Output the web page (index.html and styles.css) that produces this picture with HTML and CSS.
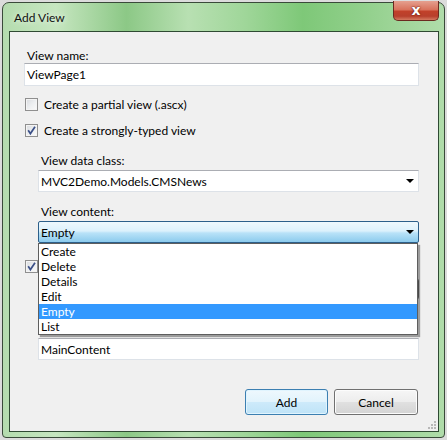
FILE: index.html
```html
<!DOCTYPE html>
<html>
<head>
<meta charset="utf-8">
<link rel="stylesheet" href="styles.css">
</head>
<body>
<div class="window">
  <div class="titlebar">
    <span class="title">Add View</span>
    <div class="close"><span>x</span></div>
  </div>
  <div class="client">
    <div class="label">View name:</div>
    <div class="textbox">ViewPage1</div>

    <div class="check first"><span class="box"></span><span>Create a partial view (.ascx)</span></div>
    <div class="check second"><span class="box checked"><svg viewBox="0 0 13 13" width="13" height="13"><path d="M3.2 6.2 L5.4 9.6 L10 2.8" fill="none" stroke="#3b5088" stroke-width="1.7"/></svg></span><span>Create a strongly-typed view</span></div>

    <div class="group">
      <div class="label ind">View data class:</div>
      <div class="combo"><span>MVC2Demo.Models.CMSNews</span><span class="arrow"></span></div>

      <div class="label ind content-label">View content:</div>
      <div class="dropwrap">
        <div class="combo focused"><span>Empty</span><span class="arrow"></span></div>
        <ul class="list">
          <li>Create</li>
          <li>Delete</li>
          <li>Details</li>
          <li>Edit</li>
          <li class="sel">Empty</li>
          <li>List</li>
        </ul>
      </div>
    </div>

    <div class="check third"><span class="box checked"><svg viewBox="0 0 13 13" width="13" height="13"><path d="M3.2 6.2 L5.4 9.6 L10 2.8" fill="none" stroke="#3b5088" stroke-width="1.7"/></svg></span></div>
    <div class="group">
      <div class="master"><div class="textbox flexgrow"></div><div class="dots"></div></div>
      <div class="label ind cph"></div>
      <div class="textbox">MainContent</div>
    </div>

    <div class="footer">
      <div class="btn default">Add</div>
      <div class="btn">Cancel</div>
    </div>
    <svg class="grip" width="10" height="10" viewBox="0 0 10 10">
      <g fill="#b8b8b8">
        <rect x="7" y="1" width="2" height="2"/>
        <rect x="4" y="4" width="2" height="2"/><rect x="7" y="4" width="2" height="2"/>
        <rect x="1" y="7" width="2" height="2"/><rect x="4" y="7" width="2" height="2"/><rect x="7" y="7" width="2" height="2"/>
      </g>
    </svg>
  </div>
</div>
</body>
</html>
```
FILE: styles.css
```css
* { box-sizing: border-box; }
html, body { margin: 0; padding: 0; }
body {
  width: 447px;
  height: 440px;
  background: #dcdcdc;
  font-family: Lato, "Open Sans", sans-serif;
  font-size: 12px;
  line-height: 15px;
  color: #000;
  overflow: hidden;
}
.window {
  margin: 2px 0 0 2px;
  width: 443px;
  height: 436px;
  border: 1px solid #3a4a3a;
  border-radius: 7px 7px 4px 4px;
  background: linear-gradient(90deg, #b4dcae 0%, #c6e6c0 12%, #8cc886 28%, #b8e0b2 42%, #9fd699 55%, #7ec878 68%, #92d08c 82%, #b0dcaa 100%);
  padding: 0 5px 5px 6px;
  display: flex;
  flex-direction: column;
}
.titlebar {
  height: 28px;
  display: flex;
  justify-content: space-between;
  align-items: flex-start;
  padding-left: 5px;
}
.title {
  margin-top: 7px;
  font-size: 12px;
  color: #111;
  text-shadow: 0 0 6px rgba(255,255,255,0.9);
}
.close {
  margin-top: -2px;
  width: 46px;
  height: 20px;
  border: 1px solid #6b2a20;
  border-top: none;
  border-radius: 0 0 5px 5px;
  background: linear-gradient(180deg, #e5a08f 0%, #d9735d 45%, #c1412a 55%, #b8402c 80%, #d47a60 100%);
  display: flex;
  justify-content: center;
  align-items: center;
}
.close span {
  color: #fff;
  font-family: "DejaVu Sans", sans-serif;
  font-weight: bold;
  font-size: 14px;
  line-height: 14px;
  margin-top: -2px;
  text-shadow: 0 0 2px #6a1a10, 0 0 1px #6a1a10;
}
.client {
  position: relative;
  flex: 1;
  border: 1px solid #2f4a33;
  background: #f0f0f0;
  padding: 16px 19px 16px 14px;
  display: flex;
  flex-direction: column;
}
.label { height: 15px; padding-left: 3px; }
.textbox {
  height: 23px;
  background: #fff;
  border: 1px solid #dde2e8;
  border-top-color: #abadb3;
  padding: 3px 0 0 2px;
}
.check {
  display: flex;
  align-items: center;
  height: 15px;
  padding-left: 1px;
  gap: 6px;
}
.check.first { margin-top: 11px; }
.check.second { margin-top: 11px; }
.check.third { margin-top: 16px; }
.box {
  width: 13px;
  height: 13px;
  border: 1px solid #8f8f8f;
  background: linear-gradient(135deg, #d8dade 0%, #eceef0 50%, #fafafa 100%);
  box-shadow: inset 0 0 0 1px #f4f4f4;
  position: relative;
  flex: none;
}
.box svg { position: absolute; left: -1px; top: -1px; }
.group {
  margin-left: 14px;
  display: flex;
  flex-direction: column;
}
.group > .label:first-child { margin-top: 15px; }
.label.ind { margin-bottom: 2px; }
.content-label { margin-top: 12px; }
.combo {
  height: 22px;
  background: #fff;
  border: 1px solid #dde2e8;
  border-top-color: #abadb3;
  display: flex;
  justify-content: space-between;
  align-items: center;
  padding: 0 4px 0 2px;
}
.combo.focused {
  border: 1px solid #2c5f8a;
  border-radius: 2px;
  background: linear-gradient(180deg, #eef8fd 0%, #dcf1fc 45%, #b9e2f8 55%, #8ccbed 100%);
}
.arrow {
  width: 0;
  height: 0;
  border-left: 4px solid transparent;
  border-right: 4px solid transparent;
  border-top: 4px solid #000;
}
.dropwrap { position: relative; }
.list {
  position: absolute;
  left: 0;
  top: 22px;
  width: 380px;
  margin: 0;
  padding: 0;
  list-style: none;
  background: #fff;
  border: 1px solid #5e5e5e;
  box-shadow: 2px 2px 1px rgba(0,0,0,0.35);
  z-index: 5;
}
.list li { height: 15px; padding-left: 2px; }
.list li.sel { background: #3399ff; color: #fff; }
.master { display: flex; gap: 6px; margin-top: 4px; height: 22px; }
.flexgrow { flex: 1; height: 22px; }
.dots {
  width: 26px;
  height: 22px;
  border: 1px solid #707070;
  border-radius: 3px;
  background: #e8e8e8;
}
.cph { margin-top: 21px; }
.group .textbox:last-child { height: 22px; }
.footer {
  margin-top: auto;
  display: flex;
  justify-content: flex-end;
  gap: 6px;
  padding-right: 1px;
}
.btn {
  width: 84px;
  height: 26px;
  border: 1px solid #707070;
  border-radius: 3px;
  background: linear-gradient(180deg, #f6f6f6 0%, #ededed 48%, #e0e0e0 52%, #d4d4d4 100%);
  box-shadow: inset 0 0 0 1px #fcfcfc;
  display: flex;
  justify-content: center;
  align-items: center;
}
.btn.default {
  width: 83px;
  border-color: #3c7fb1;
  background: linear-gradient(180deg, #eef8fd 0%, #e2f3fc 48%, #cdeafa 52%, #bfe3f7 100%);
  box-shadow: inset 0 0 0 1px #e0f4fe;
}
.grip { position: absolute; right: 1px; bottom: 1px; }
```
